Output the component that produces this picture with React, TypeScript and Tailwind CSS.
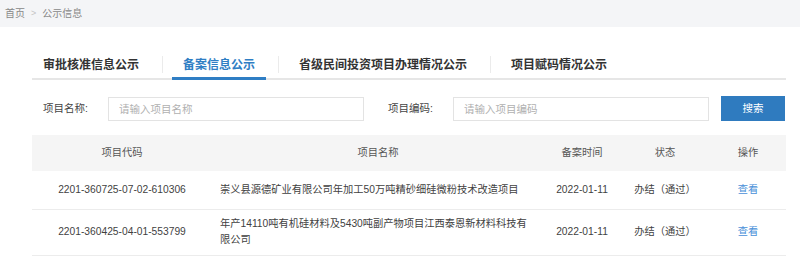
import React from "react";

const FONT = '"Liberation Sans", "Noto Sans CJK SC", sans-serif';

const tabs = ["审批核准信息公示", "备案信息公示", "省级民间投资项目办理情况公示", "项目赋码情况公示"];

const rows = [
  {
    code: "2201-360725-07-02-610306",
    name: "崇义县源德矿业有限公司年加工50万吨精砂细硅微粉技术改造项目",
    date: "2022-01-11",
    status: "办结（通过）",
  },
  {
    code: "2201-360425-04-01-553799",
    name: "年产14110吨有机硅材料及5430吨副产物项目江西泰恩新材料科技有限公司",
    date: "2022-01-11",
    status: "办结（通过）",
  },
];

function Tabs({ active }: { active: number }) {
  return (
    <div className="mt-[23px] flex items-center border-b-2 border-[#e6e6e6]">
      {tabs.map((t, i) => (
        <React.Fragment key={t}>
          {i > 0 && <div className="ml-[12px] mr-[9px] h-[17px] w-px bg-[#ebebeb]" />}
          <div
            className={
              "-mb-[2px] flex h-[30px] items-center border-b-[3px] px-[11px] pt-[3px] text-[12px] font-bold " +
              (i === active ? "border-[#2f7ec4] text-[#2f7ec4]" : "border-transparent text-[#333]")
            }
          >
            {t}
          </div>
        </React.Fragment>
      ))}
    </div>
  );
}

function SearchField({ label, placeholder }: { label: string; placeholder: string }) {
  return (
    <div className="flex items-center">
      <span className="w-[65px] text-[10.5px] text-[#444]">{label}</span>
      <input
        className="h-[24px] w-[256px] border border-[#e3e3e3] bg-white pl-[10px] text-[10.5px] text-[#333] outline-none placeholder:text-[#b0b0b0]"
        placeholder={placeholder}
      />
    </div>
  );
}

export default function App() {
  return (
    <div className="h-[262px] w-[800px] overflow-hidden bg-white" style={{ fontFamily: FONT }}>
      <div className="flex h-[27px] items-center gap-[6px] bg-[#f4f5f7] px-[5px] text-[10px] text-[#888]">
        <span>首页</span>
        <span className="text-[9px] text-[#c4c4c4]">&gt;</span>
        <span>公示信息</span>
      </div>

      <div className="ml-[32px] w-[754px]">
        <Tabs active={1} />

        <div className="mt-[16px] flex items-center pl-[11px]">
          <SearchField label="项目名称:" placeholder="请输入项目名称" />
          <div className="ml-[24px]">
            <SearchField label="项目编码:" placeholder="请输入项目编码" />
          </div>
          <button className="ml-[12px] h-[25px] w-[64px] bg-[#2f7bbf] text-[10.5px] text-white">搜索</button>
        </div>

        <table className="mt-[14px] w-full table-fixed border-collapse text-[10.25px] text-[#3f3f3f]">
          <colgroup>
            <col className="w-[180px]" />
            <col className="w-[332px]" />
            <col className="w-[76px]" />
            <col className="w-[90px]" />
            <col className="w-[76px]" />
          </colgroup>
          <thead>
            <tr className="h-[36px] bg-[#f5f5f5] text-[#555]">
              <th className="font-normal">项目代码</th>
              <th className="font-normal">项目名称</th>
              <th className="font-normal">备案时间</th>
              <th className="font-normal">状态</th>
              <th className="font-normal">操作</th>
            </tr>
          </thead>
          <tbody>
            {rows.map((r, i) => (
              <tr key={r.code} className={"border-b border-[#ececec] " + (i === 0 ? "h-[38px]" : "h-[46px]")}>
                <td className="text-center">{r.code}</td>
                <td className="pl-[8px] pr-[12px] leading-[16px]">{r.name}</td>
                <td className="text-center">{r.date}</td>
                <td className="text-center">{r.status}</td>
                <td className="text-center text-[#4a90d9]">查看</td>
              </tr>
            ))}
          </tbody>
        </table>
      </div>
    </div>
  );
}
